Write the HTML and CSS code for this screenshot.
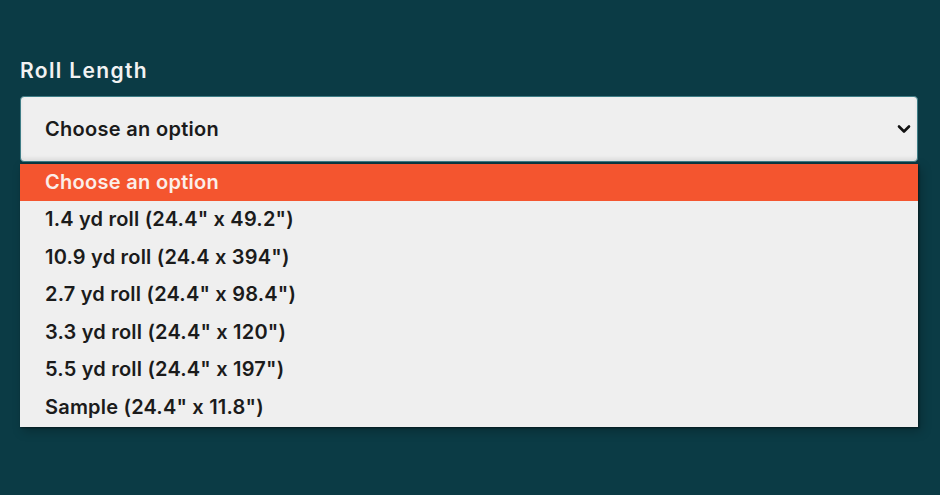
FILE: index.html
```html
<!DOCTYPE html>
<html>
<head>
<meta charset="utf-8">
<link rel="stylesheet" href="styles.css">
</head>
<body>
<div class="field">
  <div class="label">Roll Length</div>
  <div class="wrap">
    <div class="select">
      <span>Choose an option</span>
      <svg class="chev" width="14" height="10" viewBox="0 0 14 10"><path d="M2 2.5 L7 7.5 L12 2.5" fill="none" stroke="#111" stroke-width="2.6" stroke-linecap="round" stroke-linejoin="round"/></svg>
    </div>
    <ul class="menu">
      <li class="active">Choose an option</li>
      <li>1.4 yd roll (24.4" x 49.2")</li>
      <li>10.9 yd roll (24.4 x 394")</li>
      <li>2.7 yd roll (24.4" x 98.4")</li>
      <li>3.3 yd roll (24.4" x 120")</li>
      <li>5.5 yd roll (24.4" x 197")</li>
      <li>Sample (24.4" x 11.8")</li>
    </ul>
  </div>
</div>
</body>
</html>
```
FILE: styles.css
```css
html, body {
  margin: 0;
  padding: 0;
  background: #0b3b45;
  height: 100%;
}
body {
  font-family: Inter, Roboto, "Liberation Sans", sans-serif;
  font-feature-settings: "calt" 0;
}
.field {
  padding: 57px 22px 0 20px;
}
.label {
  color: #f2f2f2;
  font-size: 21px;
  font-weight: 600;
  letter-spacing: 1.35px;
  line-height: 28px;
  margin-bottom: 11px;
}
.wrap {
  position: relative;
}
.select {
  height: 66px;
  box-sizing: border-box;
  background: #efefef;
  border: 1px solid #3f7d86;
  border-radius: 4px;
  display: flex;
  align-items: center;
  justify-content: space-between;
  padding: 0 6px 0 24px;
  color: #1b1b1b;
  font-size: 20px;
  font-weight: 600;
  letter-spacing: 0.3px;
  box-shadow: inset 0 -3px 4px rgba(0,0,0,0.06);
}
.chev {
  display: block;
}
.menu {
  list-style: none;
  margin: 2px 0 0 0;
  padding: 0 0 1px 0;
  background: #efefef;
  box-shadow: 1px 1px 2px rgba(0,0,0,0.45), 3px 4px 10px rgba(0,0,0,0.25);
}
.menu li {
  height: 37.5px;
  line-height: 37px;
  padding-left: 25px;
  color: #1b1b1b;
  font-size: 20px;
  font-weight: 600;
  letter-spacing: 0.2px;
}
.menu li.active {
  background: #f4552f;
  color: #fbeee9;
  height: 37px;
  letter-spacing: 0.3px;
}
```
